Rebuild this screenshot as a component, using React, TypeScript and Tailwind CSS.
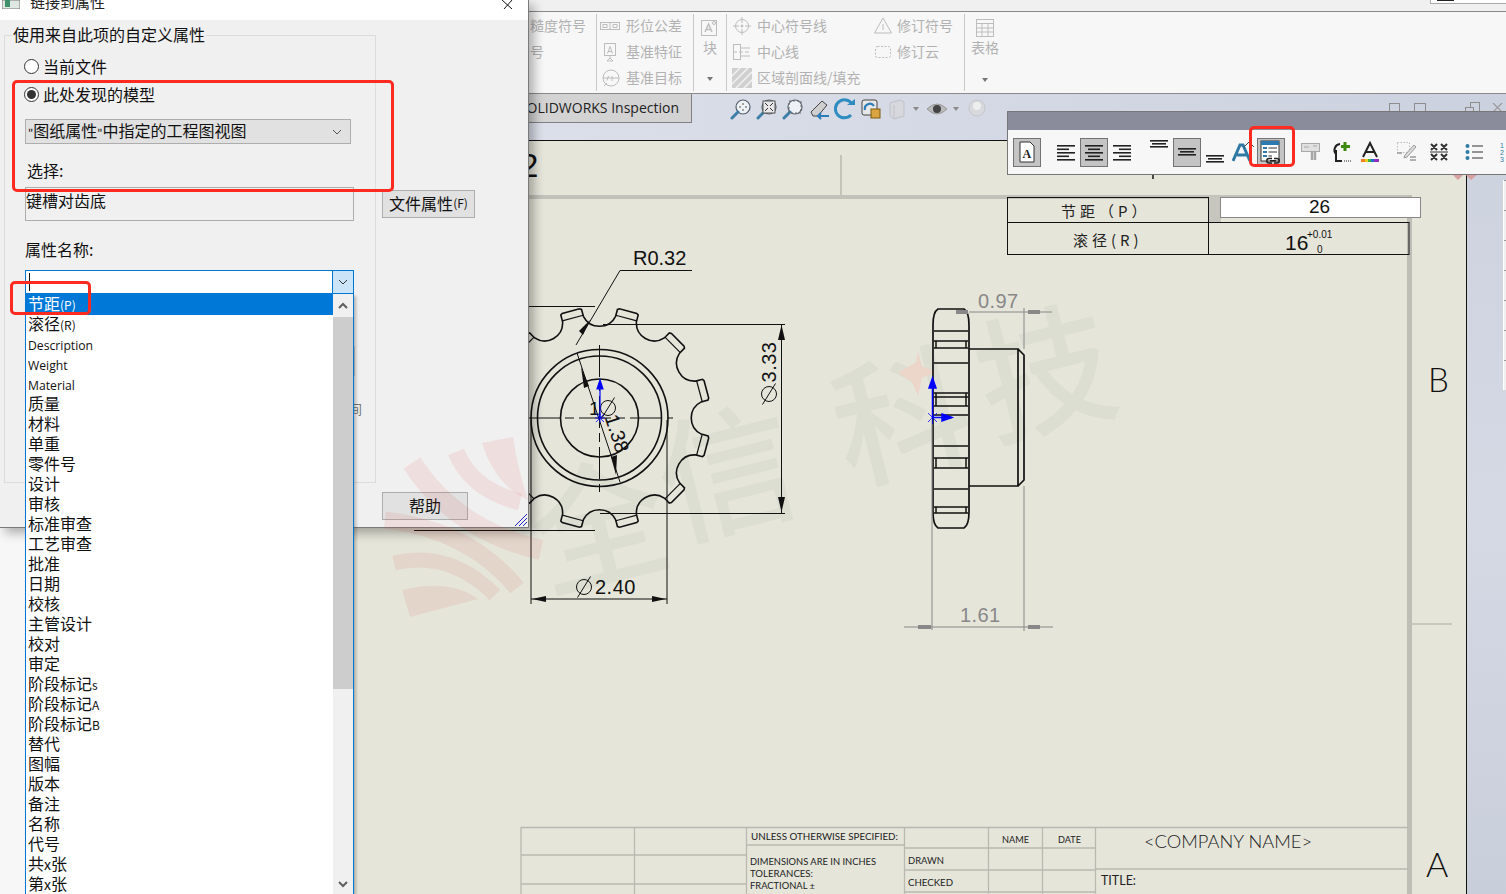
import React from "react";

const cjk = "font-['Noto_Sans_CJK_SC','Noto_Sans',sans-serif]";

const listItems: [string, string?, string?][] = [
  ["滚径", "(R)"], ["", "Description"], ["", "Weight"], ["", "Material"], ["质量"], ["材料"], ["单重"], ["零件号"], ["设计"], ["审核"],
  ["标准审查"], ["工艺审查"], ["批准"], ["日期"], ["校核"], ["主管设计"], ["校对"], ["审定"], ["阶段标记", "s"], ["阶段标记", "A"], ["阶段标记", "B"],
  ["替代"], ["图幅"], ["版本"], ["备注"], ["名称"], ["代号"], ["共", "x", "张"], ["第", "x", "张"],
];

const cx = 599.5, cy = 418;
function P(r: number, deg: number) {
  const a = ((deg - 90) * Math.PI) / 180;
  return `${(cx + r * Math.cos(a)).toFixed(2)} ${(cy + r * Math.sin(a)).toFixed(2)}`;
}
function gearPath() {
  let d = "";
  for (let i = 0; i < 12; i++) {
    const t = 15 + 30 * i;
    d += `${i === 0 ? "M" : "L"}${P(103, t - 6)} L${P(110, t - 5.6)} L${P(111, t - 4.6)} L${P(111, t + 4.6)} L${P(110, t + 5.6)} L${P(103, t + 6)} A18 18 0 0 0 ${P(103, t + 24)} `;
  }
  return d + "Z";
}
function toothLines() {
  let d = "";
  for (let i = 0; i < 12; i++) {
    const t = 15 + 30 * i;
    d += `M${P(104, t - 6)} L${P(104, t + 6)} `;
  }
  return d;
}

function Phi({ x, y, r = 7.5, c = "#111" }: { x: number; y: number; r?: number; c?: string }) {
  return (
    <g stroke={c} strokeWidth="1" fill="none">
      <circle cx={x} cy={y} r={r} />
      <line x1={x - r + 1} y1={y + r + 3} x2={x + r - 1} y2={y - r - 3} />
    </g>
  );
}

function Sheet() {
  const dims = "font-['Liberation_Sans',sans-serif]";
  const tb = "font-['Lato','Liberation_Sans',sans-serif]";
  const bodyLines = [331, 341, 348, 363, 393, 397, 406, 415, 446, 458, 468, 489, 507, 513];
  return (
    <svg width="1441" height="754" viewBox="25 140 1441 754" className="block shrink-0">
      <rect x="25" y="140" width="1441" height="754" fill="#e5e5da" />
      {/* watermark */}
      <g transform="rotate(-14 840 430)" className={cjk} fontSize="136" fill="#dddED2" fontWeight="500">
        <text x="515" y="515">全</text>
        <text x="652" y="495">信</text>
        <text x="835" y="483">科</text>
        <text x="985" y="475">技</text>
      </g>
      <polygon points="898,373 916,362 918,352 922,366 936,372 922,378 918,396 912,382" fill="#ecd6ca" />
      {/* frame */}
      <line x1="25" y1="140.5" x2="1466" y2="140.5" stroke="#111" />
      <rect x="528" y="195" width="880" height="4" fill="#c2c2ba" />
      <rect x="1407" y="195" width="5" height="699" fill="#bebeb7" />
      <line x1="841" y1="155" x2="841" y2="195" stroke="#b8b8b0" strokeWidth="1.5" />
      <line x1="1412" y1="624" x2="1452" y2="624" stroke="#bebeb7" strokeWidth="1.5" />
      <line x1="1153" y1="170" x2="1153" y2="179" stroke="#111" strokeWidth="1.5" />
      <text x="520" y="177" fontSize="33" className={dims} fill="#111">2</text>
      <text x="1428" y="392" fontSize="33" fontWeight="300" className={tb} fill="#111">B</text>
      <text x="1426" y="877" fontSize="34" fontWeight="300" className={tb} fill="#111">A</text>

      {/* table */}
      <rect x="1208" y="197" width="13" height="25" fill="#c6c6be" />
      <g stroke="#111" strokeWidth="1" fill="none">
        <rect x="1007.5" y="197.5" width="201" height="25" />
        <rect x="1007.5" y="222.5" width="401.5" height="32" />
        <line x1="1208.5" y1="222" x2="1208.5" y2="254" />
      </g>
      <rect x="1220.5" y="197.5" width="200" height="20" fill="#fff" stroke="#888" />
      <text x="1061" y="217" fontSize="15" className={cjk} fill="#222" letterSpacing="4">节距（P）</text>
      <text x="1073" y="246" fontSize="15" className={cjk} fill="#222" letterSpacing="4">滚径(R)</text>
      <text x="1309" y="213" fontSize="19" className={dims} fill="#111">26</text>
      <text x="1285" y="250" fontSize="21" className={dims} fill="#111">16</text>
      <text x="1307" y="238" fontSize="10" className={dims} fill="#111">+0.01</text>
      <text x="1317" y="253" fontSize="10" className={dims} fill="#111">0</text>

      {/* gear */}
      <g fill="none" stroke="#111" strokeWidth="1.6">
        <path d={gearPath()} />
        <path d={toothLines()} strokeWidth="1.2" />
        <circle cx={cx} cy={cy} r="68.5" />
        <circle cx={cx} cy={cy} r="62" />
        <circle cx={cx} cy={cy} r="39" />
      </g>
      <g stroke="#111" strokeWidth="1" fill="none">
        <line x1="528" y1="418" x2="673" y2="418" strokeDasharray="32 5 9 5" />
        <line x1="599.5" y1="345" x2="599.5" y2="492" strokeDasharray="32 5 9 5" />
        <polyline points="692,270.5 620,270.5 576,345" />
        <line x1="577" y1="353" x2="620" y2="482" />
        <line x1="414" y1="530.5" x2="595" y2="530.5" />
        <line x1="528" y1="306.5" x2="595" y2="306.5" />
        <line x1="603" y1="324.5" x2="785" y2="324.5" />
        <line x1="600" y1="513.5" x2="785" y2="513.5" />
        <line x1="781.5" y1="324" x2="781.5" y2="513" />
        <line x1="531" y1="420" x2="531" y2="604" />
        <line x1="667" y1="420" x2="667" y2="604" />
        <line x1="531" y1="599" x2="667" y2="599" />
      </g>
      <g fill="#111">
        <polygon points="590,320 583,335 579,331" />
        <polygon points="581,367 589,386 584,388" />
        <polygon points="616,475 611,457 617,455" />
        <polygon points="781.5,325 785,340 778,340" />
        <polygon points="781.5,512 785,497 778,497" />
        <polygon points="532,599 546,596 546,602" />
        <polygon points="666,599 652,596 652,602" />
      </g>
      <text x="633" y="265" fontSize="20" className={dims} fill="#111">R0.32</text>
      <g transform="rotate(-90 769 362)"><text x="769" y="369" fontSize="20" textAnchor="middle" letterSpacing="0.5" className={dims} fill="#111">3.33</text></g>
      <Phi x={769} y={394} />
      <text x="595" y="594" fontSize="20" letterSpacing="0.5" className={dims} fill="#111">2.40</text>
      <Phi x={584} y={587} />
      <text x="589" y="415" fontSize="19" className={dims} fill="#111">1</text>
      <Phi x={608} y={408} />
      <g transform="rotate(72 617 433)"><text x="598" y="440" fontSize="20" className={dims} fill="#111">1.38</text></g>
      <g stroke="#00f" strokeWidth="1.2" fill="#00f">
        <line x1="600" y1="418" x2="600" y2="388" />
        <polygon points="600,380 603,389 597,389" />
        <path d="M596 414 L604 422 M604 414 L596 422 M600 413 V423 M595 418 H605" fill="none" strokeWidth="0.8" />
      </g>

      {/* side view */}
      <g fill="none" stroke="#111" strokeWidth="1.7">
        <path d="M938 309 H964 Q969 312 969 325 V512 Q969 525 964 528 H938 Q933 525 933 512 V325 Q933 312 938 309 Z" />
        <path d="M969 349 H1018 V486 H969 M1018 349 L1024 355 V480 L1018 486" />
        <path d={bodyLines.map((y) => `M934 ${y} H968`).join(" ")} strokeWidth="1.5" />
        <path d="M936 341 V348 M966 341 V348 M936 393 V406 M966 393 V406 M936 458 V468 M966 458 V468 M936 507 V513 M966 507 V513" strokeWidth="1.5" />
      </g>
      <g stroke="#888" strokeWidth="1" fill="#888">
        <line x1="932" y1="420" x2="932" y2="630" />
        <line x1="1024" y1="308" x2="1024" y2="349" />
        <line x1="1024" y1="486" x2="1024" y2="631" />
        <line x1="1024" y1="312" x2="1052" y2="312" />
        <line x1="969" y1="312" x2="1024" y2="312" />
        <line x1="904" y1="627" x2="1053" y2="627" />
        <rect x="956" y="310" width="12" height="4" stroke="none" />
        <rect x="1028" y="310" width="12" height="4" stroke="none" />
        <rect x="918" y="625" width="13" height="4" stroke="none" />
        <rect x="1028" y="625" width="12" height="4" stroke="none" />
      </g>
      <text x="978" y="308" fontSize="20" letterSpacing="0.4" className={dims} fill="#888">0.97</text>
      <text x="960" y="622" fontSize="20" letterSpacing="0.4" className={dims} fill="#888">1.61</text>
      <g stroke="#00f" strokeWidth="1.5" fill="#00f">
        <line x1="932.5" y1="418" x2="932.5" y2="386" />
        <polygon points="932.5,378 936,388 929,388" />
        <line x1="932" y1="417.5" x2="952" y2="417.5" />
        <polygon points="942,414 952,417.5 942,421" />
        <path d="M928 413 L937 422 M937 413 L928 422 M932.5 412 V424" fill="none" strokeWidth="0.8" />
      </g>

      {/* title block */}
      <g stroke="#b9b9b1" strokeWidth="1.3" fill="none">
        <path d="M521 894 V827.5 H1408" />
        <path d="M634.5 827 V894 M746.5 827 V894 M904.5 827 V894 M988.5 827 V894 M1042.5 827 V894 M1095.5 827 V894" />
        <path d="M521 855 H746 M521 884 H746 M746 845 H904 M904 848 H1095 M904 870 H1095 M904 892 H1095 M1095 869 H1408" />
      </g>
      <g className={tb} fill="#222">
        <text x="751" y="840" fontSize="10" textLength="147" lengthAdjust="spacingAndGlyphs">UNLESS OTHERWISE SPECIFIED:</text>
        <text x="750" y="865" fontSize="10" textLength="126" lengthAdjust="spacingAndGlyphs">DIMENSIONS ARE IN INCHES</text>
        <text x="750" y="877" fontSize="10" textLength="63" lengthAdjust="spacingAndGlyphs">TOLERANCES:</text>
        <text x="750" y="889" fontSize="10" textLength="65" lengthAdjust="spacingAndGlyphs">FRACTIONAL ±</text>
        <text x="1002" y="843" fontSize="10" textLength="27" lengthAdjust="spacingAndGlyphs">NAME</text>
        <text x="1058" y="843" fontSize="10" textLength="23" lengthAdjust="spacingAndGlyphs">DATE</text>
        <text x="908" y="864" fontSize="10" textLength="36" lengthAdjust="spacingAndGlyphs">DRAWN</text>
        <text x="908" y="886" fontSize="10" textLength="45" lengthAdjust="spacingAndGlyphs">CHECKED</text>
        <text x="1144" y="848" fontSize="17" fontWeight="300" textLength="168" lengthAdjust="spacingAndGlyphs">&lt;COMPANY NAME&gt;</text>
        <text x="1101" y="885" fontSize="14" textLength="35" lengthAdjust="spacingAndGlyphs">TITLE:</text>
      </g>
    </svg>
  );
}

function RibbonText({ children }: { children: React.ReactNode }) {
  return <span className="block text-[14px] leading-[24px] h-[26px] text-[#b2b2b2] whitespace-nowrap">{children}</span>;
}

const G = "#bdbdbd";
function RIcon({ d, children }: { d?: string; children?: React.ReactNode }) {
  return (
    <svg width="20" height="20" viewBox="0 0 20 20" fill="none" stroke={G} strokeWidth="1" className="shrink-0">
      {d && <path d={d} />}
      {children}
    </svg>
  );
}

function Ribbon() {
  const sep = "self-center h-[77px] w-px bg-[#c8c8c8] shrink-0";
  return (
    <div className={`flex h-[82px] bg-[#f7f7f7] border-b border-[#8a8a8a] shrink-0 ${cjk}`}>
      <div className="w-[596px] pt-px pl-[530px] flex flex-col overflow-hidden shrink-0">
        <RibbonText>糙度符号</RibbonText>
        <RibbonText>号</RibbonText>
      </div>
      <div className={sep} />
      <div className="w-[96px] pt-px pl-[3px] flex flex-col shrink-0">
        <div className="flex h-[26px] items-center gap-[6px]">
          <RIcon><rect x="0.5" y="6.5" width="19" height="7" /><rect x="3" y="8.5" width="4" height="3" /><path d="M10 6.5V13.5M13 8.5H17V11.5H13Z" /></RIcon>
          <RibbonText>形位公差</RibbonText>
        </div>
        <div className="flex h-[26px] items-center gap-[6px]">
          <RIcon><rect x="4.5" y="1.5" width="11" height="12" /><path d="M7.5 11.5L10 4.5L12.5 11.5M8 9.5H12M10 14V17M7 19L10 16L13 19Z" /></RIcon>
          <RibbonText>基准特征</RibbonText>
        </div>
        <div className="flex h-[26px] items-center gap-[6px]">
          <RIcon><circle cx="11" cy="10" r="8" /><path d="M3 10H19M4 18L7 15M7 12.5L8.5 8M12 8V13" /></RIcon>
          <RibbonText>基准目标</RibbonText>
        </div>
      </div>
      <div className={sep} />
      <div className="w-[32px] pt-[7px] flex flex-col items-center shrink-0">
        <svg width="18" height="18" viewBox="0 0 18 18" fill="none" stroke={G}><rect x="0.5" y="1.5" width="15" height="15" /><path d="M4 13L7.5 5L11 13M5 10.5H10" strokeWidth="1.5" /><circle cx="13" cy="4" r="1.5" /></svg>
        <span className="text-[14px] leading-[20px] text-[#b2b2b2]">块</span>
        <span className="mt-[20px] w-0 h-0 border-x-[3px] border-x-transparent border-t-[4px] border-t-[#777]" />
      </div>
      <div className={sep} />
      <div className="w-[237px] pt-px pl-[5px] flex flex-col shrink-0">
        <div className="flex h-[26px] items-center">
          <RIcon><circle cx="10" cy="10" r="6.5" /><path d="M10 1V7M10 13V19M1 10H7M13 10H19" /><circle cx="10" cy="10" r="1" fill={G} /></RIcon>
          <span className="ml-[5px] w-[116px]"><RibbonText>中心符号线</RibbonText></span>
          <RIcon><path d="M10 2L18.5 17H1.5Z" /><path d="M10 8V14" /></RIcon>
          <span className="ml-[4px]"><RibbonText>修订符号</RibbonText></span>
        </div>
        <div className="flex h-[26px] items-center">
          <RIcon><rect x="1.5" y="2.5" width="7" height="15" /><path d="M1 10H19" strokeDasharray="4 2" /><path d="M18 6H8M18 14H8" /></RIcon>
          <span className="ml-[5px] w-[116px]"><RibbonText>中心线</RibbonText></span>
          <RIcon><rect x="2.5" y="4.5" width="15" height="11" rx="2" strokeDasharray="2 1.5" /></RIcon>
          <span className="ml-[4px]"><RibbonText>修订云</RibbonText></span>
        </div>
        <div className="flex h-[26px] items-center">
          <svg width="20" height="20" viewBox="0 0 20 20" className="shrink-0"><rect width="20" height="20" fill="#d0d0d0" /><path d="M0 16L16 0M4 20L20 4M0 8L8 0M12 20L20 12" stroke="#f2f2f2" strokeWidth="1.5" /></svg>
          <span className="ml-[5px]"><RibbonText>区域剖面线/填充</RibbonText></span>
        </div>
      </div>
      <div className={sep} />
      <div className="w-[40px] pt-[6px] flex flex-col items-center shrink-0">
        <svg width="20" height="20" viewBox="0 0 20 20" fill="none" stroke={G}><rect x="1.5" y="1.5" width="17" height="17" /><path d="M1.5 5.5H18.5M1.5 10H18.5M1.5 14H18.5M7 5.5V18.5M13 5.5V18.5" /></svg>
        <span className="text-[14px] leading-[18px] text-[#b2b2b2]">表格</span>
        <span className="mt-[22px] w-0 h-0 border-x-[3px] border-x-transparent border-t-[4px] border-t-[#777]" />
      </div>
    </div>
  );
}

function Mag({ children }: { children?: React.ReactNode }) {
  return (
    <svg width="22" height="22" viewBox="0 0 22 22" fill="none">
      <circle cx="13" cy="9" r="7" stroke="#55606a" strokeWidth="1.2" fill="#eef2f6" />
      <path d="M8 14L2 20" stroke="#3d7fa8" strokeWidth="3" strokeLinecap="round" />
      {children}
    </svg>
  );
}

function ViewBand() {
  return (
    <div className="h-[46px] shrink-0 flex items-start bg-gradient-to-r from-[#e4e7ef] to-[#ccd1df] relative">
      <div className="w-[692px] h-[29px] pb-[2px] bg-[#d3d3d3] border-r border-b border-[#808080] flex items-center justify-end pr-[12px] font-['Open_Sans','Liberation_Sans',sans-serif] text-[14px] text-[#222] shrink-0">
        SOLIDWORKS Inspection
      </div>
      <div className="flex items-center h-[29px] ml-[38px] gap-[4px]">
        <Mag><path d="M13 5V7M13 11V13M9 9H11M15 9H17" stroke="#555" /></Mag>
        <Mag><rect x="7" y="3" width="12" height="12" fill="#e8e8e8" stroke="#555" /><path d="M9 5L12 8M17 5L14 8M9 13L12 10M17 13L14 10" stroke="#333" /></Mag>
        <Mag><rect x="7" y="3" width="12" height="12" stroke="#666" strokeDasharray="2 2" /></Mag>
        <svg width="22" height="22" viewBox="0 0 22 22"><path d="M3 14L14 3L19 7L10 18H5Z" fill="#cfcfcf" stroke="#444" /><path d="M21 18H10M13 15L10 18L13 21" stroke="#2b7cb8" strokeWidth="2" fill="none" /></svg>
        <svg width="22" height="22" viewBox="0 0 22 22" fill="none"><path d="M18 6A9 9 0 1 0 17 17" stroke="#2f8cc0" strokeWidth="3" /><path d="M13 7H21V1Z" fill="#2f8cc0" /></svg>
        <svg width="22" height="22" viewBox="0 0 22 22"><rect x="2" y="2" width="15" height="15" rx="2" fill="#e8e8e8" stroke="#444" /><path d="M5 12A5 5 0 0 1 14 8" stroke="#2b7cb8" strokeWidth="2.2" fill="none" /><rect x="11" y="11" width="9" height="9" fill="#d9a441" stroke="#7a5a10" /></svg>
        <svg width="22" height="22" viewBox="0 0 22 22"><path d="M4 5L14 2L18 4V18L8 21L4 18Z" fill="#d6d8dd" stroke="#c0c2c8" /><path d="M8 7V21" stroke="#c0c2c8" /></svg>
        <span className="w-0 h-0 border-x-[3px] border-x-transparent border-t-[4px] border-t-[#8a8a8a] mx-[1px]" />
        <svg className="ml-[2px]" width="22" height="18" viewBox="0 0 22 18"><path d="M1 9Q11 -1 21 9Q11 19 1 9Z" fill="#bbb" stroke="#999" /><circle cx="11" cy="9" r="4" fill="#444" /></svg>
        <span className="w-0 h-0 border-x-[3px] border-x-transparent border-t-[4px] border-t-[#8a8a8a] mx-[1px]" />
        <svg className="ml-[3px]" width="20" height="20" viewBox="0 0 20 20"><circle cx="10" cy="9" r="8" fill="#d8d9dc" stroke="#c6c7cc" /><circle cx="10" cy="7" r="4" fill="#eee" /></svg>
      </div>
      <div className="absolute left-[1389px] top-[9px] w-[11px] h-[9px] border border-[#8e8e8e] border-b-0" />
      <div className="absolute left-[1414px] top-[9px] w-[12px] h-[9px] border border-[#8e8e8e] border-b-0" />
      <div className="absolute left-[1470px] top-[8px] w-[10px] h-[9px] border border-[#8e8e8e] border-b-0" />
      <div className="absolute left-[1465px] top-[13px] w-[9px] h-[4px] border border-[#8e8e8e] border-b-0 bg-[#cdd1dd]" />
      <svg className="absolute left-[1492px] top-[9px]" width="12" height="8" viewBox="0 0 12 8"><path d="M1 0L10 9M10 0L1 9" stroke="#999" strokeWidth="1.2" /></svg>
    </div>
  );
}

function Lines({ kind }: { kind: "l" | "c" | "r" }) {
  const ys = [2, 5.5, 9, 12.5, 16];
  return (
    <svg width="18" height="18" viewBox="0 0 18 18" className="shrink-0">
      {ys.map((y, i) => {
        const w = i % 2 === 0 ? 18 : 12;
        const x = kind === "l" ? 0 : kind === "c" ? (18 - w) / 2 : 18 - w;
        return <rect key={y} x={x} y={y} width={w} height="1.6" fill="#222" />;
      })}
    </svg>
  );
}
function VLines() {
  return (
    <svg width="18" height="8" viewBox="0 0 18 8" className="shrink-0">
      <rect y="0" width="18" height="1.6" fill="#222" />
      <rect x="2" y="3" width="14" height="1.6" fill="#222" />
      <rect y="6" width="18" height="1.6" fill="#222" />
    </svg>
  );
}
function Pressed({ className = "", children }: { className?: string; children: React.ReactNode }) {
  return <div className={`w-[28px] h-[29px] bg-[#c4c4c4] border border-[#737373] flex items-center justify-center shrink-0 ${className}`}>{children}</div>;
}

function FloatToolbar() {
  return (
    <div className="absolute left-[1007px] top-[111px] w-[510px] h-[64px] border border-[#777] flex flex-col bg-[#f7f7f7] z-20">
      <div className="h-[18px] bg-[#8a8c9c] shrink-0" />
      <div className="flex-1 flex items-center pl-[5px] overflow-hidden">
        <Pressed>
          <svg width="16" height="22" viewBox="0 0 16 22"><path d="M1 1H11L15 5V21H1Z" fill="#fff" stroke="#333" /><text x="3.5" y="17" fontSize="12" fontWeight="700" fontFamily="Liberation Serif" fill="#222">A</text></svg>
        </Pressed>
        <div className="ml-[16px]"><Lines kind="l" /></div>
        <Pressed className="ml-[5px]"><Lines kind="c" /></Pressed>
        <div className="ml-[5px]"><Lines kind="r" /></div>
        <div className="ml-[19px] -mt-[16px]"><VLines /></div>
        <Pressed className="ml-[5px]"><VLines /></Pressed>
        <div className="ml-[5px] mt-[14px]"><VLines /></div>
        <svg className="ml-[8px] shrink-0" width="23" height="24" viewBox="0 0 23 24">
          <path d="M1 21L8 5H11L18 21M5 15H15" fill="none" stroke="#2e7aa5" strokeWidth="3" />
          <path d="M12 7L17 2L22 7" fill="#f7f7f7" stroke="#444" />
        </svg>
        <Pressed className="ml-[2px]">
          <svg width="22" height="25" viewBox="0 0 22 25">
            <rect x="1" y="1" width="18" height="20" fill="#fff" stroke="#333" />
            <rect x="1" y="1" width="18" height="4" fill="#2c7bb0" />
            <rect x="3" y="7" width="4" height="2" fill="#2c7bb0" />
            <rect x="3" y="11" width="4" height="2" fill="#2c7bb0" />
            <rect x="3" y="15" width="4" height="2" fill="#2c7bb0" />
            <path d="M8.5 8H17M8.5 12H17M8.5 16H12" stroke="#333" />
            <path d="M12 23H9A2.2 2.2 0 0 1 9 18.5H12M14 18.5H17A2.2 2.2 0 0 1 17 23H14M10 20.8H16" stroke="#222" strokeWidth="1.5" fill="none" />
          </svg>
        </Pressed>
        <svg className="ml-[16px] shrink-0" width="20" height="20" viewBox="0 0 20 20" fill="none" stroke="#a8a8a8">
          <rect x="0.5" y="1.5" width="18" height="8" fill="#e0e0e0" />
          <path d="M11 9V18M14 9V18" strokeWidth="2.5" />
          <path d="M3 5H8M12 4H16" />
        </svg>
        <svg className="ml-[10px] shrink-0" width="20" height="22" viewBox="0 0 20 22" fill="none">
          <path d="M9 3A6 6 0 0 0 5 13" stroke="#222" strokeWidth="2" />
          <path d="M5 9V20H11" stroke="#222" strokeWidth="2" />
          <path d="M13 20H20" stroke="#222" strokeDasharray="1 1" />
          <path d="M14 1V10M10 5.5H19" stroke="#3d8a10" strokeWidth="3" />
        </svg>
        <svg className="ml-[9px] shrink-0" width="20" height="22" viewBox="0 0 20 22" fill="none">
          <path d="M3 16L10 2L17 16M6 11H14" stroke="#222" strokeWidth="2" />
          <rect x="1" y="18" width="4" height="3" fill="#f08020" /><rect x="5" y="18" width="3" height="3" fill="#e8d020" /><rect x="8" y="18" width="3" height="3" fill="#40b040" /><rect x="11" y="18" width="3" height="3" fill="#2070d0" /><rect x="14" y="18" width="5" height="3" fill="#9030c0" />
        </svg>
        <svg className="ml-[17px] shrink-0" width="20" height="20" viewBox="0 0 20 20" fill="none">
          <rect x="0.5" y="0.5" width="12" height="10" stroke="#bbb" strokeDasharray="1.5 1.5" />
          <path d="M8 13L17 3L19 5L10 15L7 16Z" fill="#ddd" stroke="#999" />
          <path d="M0 11H5M13 15H19M13 18H19" stroke="#999" strokeWidth="1.5" />
        </svg>
        <svg className="ml-[13px] shrink-0" width="18" height="18" viewBox="0 0 18 18" stroke="#333" strokeWidth="2">
          <path d="M1 1L7 7M7 1L1 7M11 1L17 7M17 1L11 7M1 11L7 17M7 11L1 17M11 11L17 17M17 11L11 17" />
          <path d="M0 9H18" strokeWidth="1" />
        </svg>
        <svg className="ml-[17px] shrink-0" width="18" height="16" viewBox="0 0 18 16">
          <path d="M7 2H18M7 8H18M7 14H18" stroke="#333" strokeWidth="1.2" />
          <circle cx="2.5" cy="2" r="2" fill="#2e7aa5" /><circle cx="2.5" cy="8" r="2" fill="#2e7aa5" /><circle cx="2.5" cy="14" r="2" fill="#2e7aa5" />
        </svg>
        <div className="ml-[17px] flex flex-col text-[7px] leading-[7px] text-[#2e7aa5] font-['Liberation_Sans',sans-serif]"><span>1</span><span>2</span><span>3</span></div>
      </div>
    </div>
  );
}

function Radio({ on }: { on?: boolean }) {
  return (
    <span className="w-[15px] h-[15px] rounded-full border border-[#333] bg-white flex items-center justify-center shrink-0">
      {on && <span className="w-[9px] h-[9px] rounded-full bg-[#333]" />}
    </span>
  );
}

function Dropdown() {
  return (
    <div className="absolute -left-px top-[23px] w-[329px] h-[600px] bg-white border-x border-[#0078d7] flex z-30 shadow-[2px_2px_3px_rgba(0,0,0,0.25)]">
      <div className="flex-1 min-w-0 flex flex-col">
        <div className="h-[21px] bg-[#0078d7] text-white pl-[2px] text-[16px] leading-[19px] shrink-0">
          节距<span className="text-[12px]">(P)</span>
        </div>
        {listItems.map((it, i) => (
          <div key={i} className="h-[20px] shrink-0 pl-[2px] text-[16px] leading-[17px] text-[#111] whitespace-nowrap">
            {it[0]}
            {it[1] && (it[0] ? <span className={it[1] === "x" ? "text-[14px]" : "text-[12px]"}>{it[1]}</span> : <span className="text-[12.2px] font-['Open_Sans',sans-serif]">{it[1]}</span>)}
            {it[2]}
          </div>
        ))}
      </div>
      <div className="w-[20px] flex flex-col bg-[#f0f0f0] shrink-0">
        <div className="h-[23px] flex items-center justify-center shrink-0">
          <svg width="10" height="7" viewBox="0 0 10 7" fill="none"><path d="M1 6L5 2L9 6" stroke="#606060" strokeWidth="2" /></svg>
        </div>
        <div className="h-[372px] bg-[#cdcdcd] shrink-0" />
        <div className="flex-1" />
        <div className="h-[19px] flex items-center justify-center shrink-0">
          <svg width="10" height="7" viewBox="0 0 10 7" fill="none"><path d="M1 1L5 5L9 1" stroke="#606060" strokeWidth="2" /></svg>
        </div>
      </div>
    </div>
  );
}

function Dialog() {
  const label = "text-[16px] leading-[18px]";
  return (
    <div className={`absolute left-0 top-0 w-[529px] h-[528px] bg-[#f0f0f0] border-r border-b border-[#7a7a7a] flex flex-col text-[#111] z-20 shadow-[5px_5px_10px_rgba(0,0,0,0.3)] ${cjk}`}>
      <div className="h-[20px] bg-white flex items-start overflow-hidden shrink-0 relative">
        <svg width="18" height="9" viewBox="0 0 18 9" className="ml-[2px] shrink-0"><rect width="18" height="9" fill="#dfe7e2" stroke="#777" /><rect x="3" y="0" width="5" height="7" fill="#3e8f6a" /></svg>
        <span className="ml-[10px] -mt-[9px] text-[15px] leading-[22px] text-[#222]">链接到属性</span>
        <svg className="absolute left-[501px] top-0" width="12" height="9" viewBox="0 0 12 9"><path d="M1 0L11 9M11 0L3 9" stroke="#111" /></svg>
      </div>
      <div className="flex flex-1 relative">
        <div className="ml-[4px] mt-[15px] w-[372px] h-[448px] border border-[#dcdcdc] relative flex flex-col shrink-0">
          <span className="absolute -top-[12px] left-[7px] bg-[#f0f0f0] px-px text-[16px] leading-[20px]">使用来自此项的自定义属性</span>
          <div className="flex items-center ml-[19px] mt-[20px] h-[20px] text-[16px] leading-[20px] gap-[4px]"><Radio /><span className="-mt-px">当前文件</span></div>
          <div className="flex items-center ml-[19px] mt-[8px] h-[20px] text-[16px] leading-[20px] gap-[4px]"><Radio on /><span className="-mt-px">此处发现的模型</span></div>
          <div className="ml-[20px] mt-[15px] w-[326px] h-[25px] bg-[#e1e1e1] border border-[#adadad] flex items-center justify-between pl-[2px] pr-[8px] text-[16px] leading-[20px]">
            <span className="-mt-[2px]"><span className="text-[11px]">"</span>图纸属性<span className="text-[11px]">"</span>中指定的工程图视图</span>
            <svg width="10" height="6" viewBox="0 0 10 6" fill="none"><path d="M1 1L5 5L9 1" stroke="#555" /></svg>
          </div>
          <div className={`ml-[22px] mt-[17px] h-[20px] ${label}`}>选择:</div>
          <div className="ml-[20px] mt-[6px] w-[329px] h-[34px] border border-[#adadad] bg-[#f0f0f0] text-[16px] leading-[24px]">键槽对齿底</div>
          <div className={`ml-[20px] mt-[19px] h-[20px] ${label}`}>属性名称:</div>
          <div className="ml-[20px] mt-[10px] w-[329px] h-[24px] border border-[#0078d7] bg-white flex relative shrink-0">
            <div className="flex-1 flex items-center pl-[3px]"><span className="w-px h-[18px] bg-[#111]" /></div>
            <div className="w-[21px] bg-[#cce4f7] border-l border-[#0078d7] flex items-center justify-center">
              <svg width="10" height="6" viewBox="0 0 10 6" fill="none"><path d="M1 1L5 5L9 1" stroke="#333" /></svg>
            </div>
            <Dropdown />
          </div>
          <div className="absolute left-[344px] top-[310px] w-[6px] h-[30px] border-r border-[#c8c8c8]" />
          <span className="absolute left-[344px] top-[364px] text-[13px] leading-[18px] text-[#777]">间</span>
        </div>
        <div className="ml-[6px] flex flex-col items-start">
          <div className="mt-[170px] w-[93px] h-[28px] pb-[2px] bg-[#e1e1e1] border border-[#adadad] flex items-center justify-center text-[16px]">
            文件属性<span className="text-[12px]">(F)</span>
          </div>
          <div className="mt-[274px] w-[86px] h-[28px] pb-[3px] bg-[#e1e1e1] border border-[#adadad] flex items-center justify-center text-[16px]">帮助</div>
        </div>
        <svg className="absolute right-0 bottom-0" width="14" height="14" viewBox="0 0 14 14">
          <path d="M1 13L13 1M5 13L13 5M9 13L13 9" stroke="#2222cc" />
        </svg>
      </div>
    </div>
  );
}

function Overlays() {
  return (
    <>
      <div className="absolute left-[12px] top-[80px] w-[382px] h-[112px] border-[3.5px] border-[#ff2a20] rounded-[5px] z-40" />
      <div className="absolute left-[10px] top-[281px] w-[81px] h-[34px] border-[3.5px] border-[#ff2a20] rounded-[5px] z-40" />
      <div className="absolute left-[1249px] top-[126px] w-[46px] h-[41px] border-[3.5px] border-[#ff2a20] rounded-[5px] z-40" />
      {/* red watermark arcs, which lie over the dialog */}
      <svg className="absolute left-[380px] top-[420px] z-30 pointer-events-none" width="180" height="220" viewBox="380 420 180 220" fill="none" stroke="#e23a28" strokeOpacity="0.09">
        <path d="M482 443L513 437Q518 470 528 500Q495 485 482 443Z" fill="#e23a28" fillOpacity="0.09" stroke="none" />
        <path d="M456 452Q472 490 520 502" strokeWidth="17" />
        <path d="M412 463Q455 530 541 550" strokeWidth="20" />
        <path d="M385 520Q470 530 517 588" strokeWidth="17" />
        <path d="M394 563Q450 550 495 595" strokeWidth="15" />
        <path d="M402 590Q450 578 478 599L410 617Z" fill="#e23a28" fillOpacity="0.09" stroke="none" />
      </svg>
    </>
  );
}

export default function App() {
  return (
    <div className={`relative w-[1506px] h-[894px] overflow-hidden bg-[#f0f0f0] flex flex-col ${cjk}`}>
      <div className="h-[12px] shrink-0 bg-[#f0f0f0] border-b border-[#8a8a8a] relative">
        <div className="absolute left-[1430px] top-0 w-[76px] h-[4px] bg-white border-l border-b border-[#aaa]"><div className="ml-[6px] w-[17px] h-px bg-[#222]" /></div>
      </div>
      <Ribbon />
      <ViewBand />
      <div className="flex flex-1 min-h-0">
        <div className="w-[25px] bg-[#f7f7f7] shrink-0" />
        <Sheet />
        <div className="flex-1 border-l border-[#111] bg-gradient-to-b from-[#cdd2df] via-[#d5d9e4] to-[#c9cedb] relative">
          <div className="absolute left-[36px] top-[40px] w-[3px] h-[210px] bg-[#f0f0f0] border-l border-[#fff] flex flex-col">
            {[0, 1, 2, 3, 4, 5, 6].map((i) => <div key={i} className="h-[30px] border-t border-[#999]" />)}
          </div>
        </div>
      </div>
      <svg className="absolute left-[1450px] top-[174px] z-10" width="30" height="8" viewBox="0 0 30 8"><path d="M3 1L8 6L13 1ZM16 1L21 6L27 1Z" fill="#d8a0a0" /></svg>
      <FloatToolbar />
      <Dialog />
      <Overlays />
    </div>
  );
}
